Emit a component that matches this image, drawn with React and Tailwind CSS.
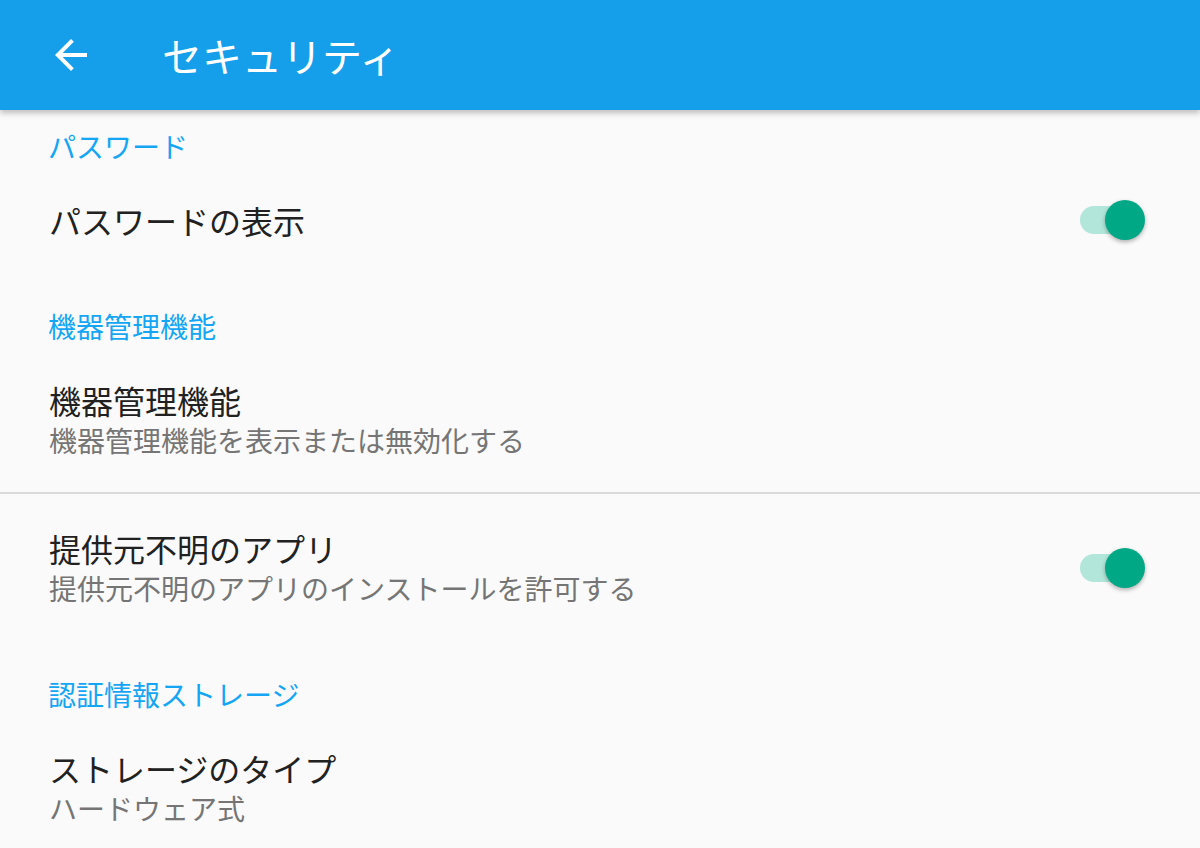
const FONT = { fontFamily: '"Noto Sans CJK JP", "Noto Sans", Roboto, sans-serif' };

function Toggle() {
  return (
    <div className="relative w-[65px] h-[40px] shrink-0">
      <div className="absolute left-0 top-[6px] w-[60px] h-[28px] rounded-full bg-[#b3e6da]" />
      <div className="absolute right-0 top-0 w-[40px] h-[40px] rounded-full bg-[#00a886] shadow-[0_2px_4px_rgba(0,0,0,0.3)]" />
    </div>
  );
}

function Section({ title, first = false }) {
  return (
    <div className={`${first ? 'pt-[16px]' : 'pt-[32px]'} pl-[48px]`}>
      <h2 className="text-[28px] leading-[40px] text-[#14a6f5]">{title}</h2>
    </div>
  );
}

function Item({ title, summary, toggle = false }) {
  return (
    <div className="flex items-center py-[34px] pl-[49px] pr-[55px]">
      <div className="min-w-0 flex-1">
        <div className="text-[32px] leading-[40px] text-[#212121]">{title}</div>
        {summary && <div className="text-[28px] leading-[40px] text-[#757575]">{summary}</div>}
      </div>
      {toggle && <Toggle />}
    </div>
  );
}

export default function App() {
  return (
    <div className="w-[1200px] h-[848px] overflow-hidden bg-[#fafafa]" style={FONT}>
      <header className="relative z-10 h-[110px] bg-[#159eea] flex items-center shadow-[0_3px_6px_rgba(0,0,0,0.25)]">
        <svg viewBox="0 0 24 24" className="w-[48px] h-[48px] ml-[47px] fill-white">
          <path d="M20 11H7.83l5.59-5.59L12 4l-8 8 8 8 1.41-1.41L7.83 13H20v-2z" />
        </svg>
        <h1 className="ml-[67px] text-[40px] leading-none text-white">セキュリティ</h1>
      </header>

      <Section title="パスワード" first />
      <Item title="パスワードの表示" toggle />

      <Section title="機器管理機能" />
      <Item title="機器管理機能" summary="機器管理機能を表示または無効化する" />

      <div className="h-[2px] bg-[#dadada] -mt-[2px]" />

      <Item title="提供元不明のアプリ" summary="提供元不明のアプリのインストールを許可する" toggle />

      <Section title="認証情報ストレージ" />
      <Item title="ストレージのタイプ" summary="ハードウェア式" />
    </div>
  );
}
